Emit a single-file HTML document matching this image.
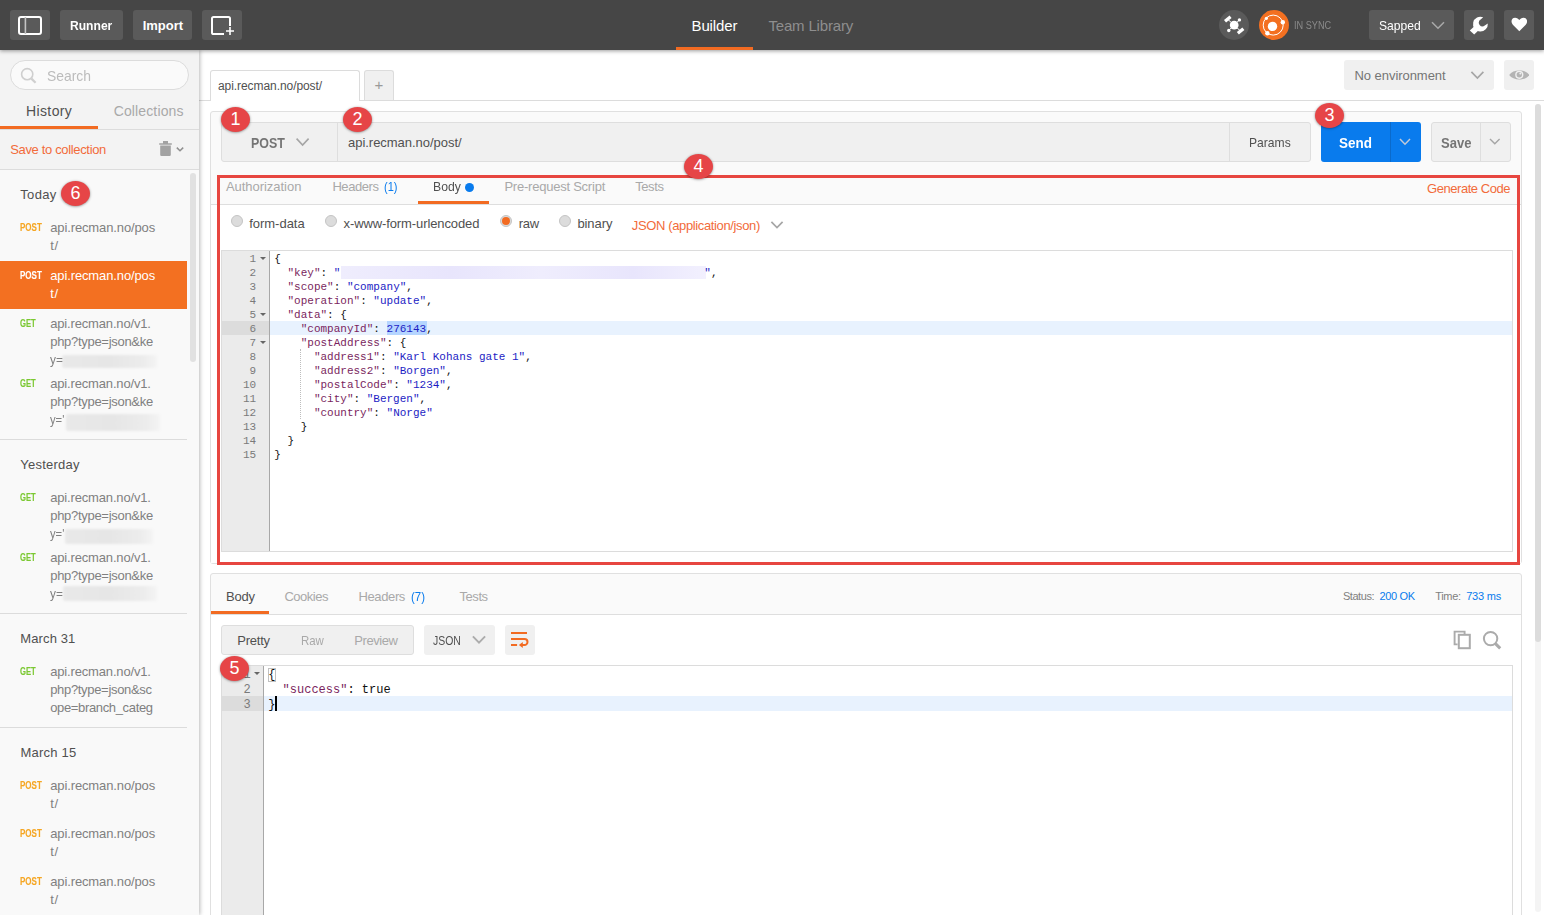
<!DOCTYPE html>
<html><head><meta charset="utf-8"><title>Postman</title>
<style>
*{box-sizing:border-box;margin:0;padding:0}
html,body{width:1544px;height:915px;overflow:hidden;background:#fff;font-family:"Liberation Sans",sans-serif;color:#505050}
.a{position:absolute}
.t{position:absolute;white-space:nowrap;line-height:20px;height:20px}
#hdr{left:0;top:0;width:1544px;height:50px;background:#464646;box-shadow:0 1px 4px rgba(0,0,0,.4);z-index:10}
.hb{position:absolute;top:10px;height:30px;background:#5a5a5a;border-radius:3px}
#side{left:0;top:50px;width:199px;height:865px;background:#f3f3f3;box-shadow:1px 0 4px rgba(0,0,0,.28);z-index:5}
.hl{position:absolute;height:1px;background:#dcdcdc}
.badge{position:absolute;width:29px;height:25px;border-radius:50%;background:#e64547;color:#fff;font-size:18px;line-height:25px;text-align:center;box-shadow:0 .5px 2.5px rgba(0,0,0,.45);z-index:20}
.panel{position:absolute;background:#fafafa;border:1px solid #e0e0e0;border-radius:3px}
.gbox{position:absolute;background:#f0f0f0;border:1px solid #dedede}
.radio{position:absolute;width:12px;height:12px;border-radius:6px;background:#dcdcdc;border:1px solid #c4c4c4}
.ed{position:absolute;border:1px solid #dcdcdc;background:#fff;overflow:hidden;font-family:"Liberation Mono",monospace}
.gut{position:absolute;left:0;top:0;bottom:0;background:#ebebeb;border-right:1px solid #a8a8a8}
.ln{position:absolute;left:0;text-align:right;color:#7a7a7a;white-space:pre}
.cl{position:absolute;white-space:pre;color:#111}
.k{color:#7a1f5e}.s{color:#1c1cc4}.n{color:#1c1cc4}
.fold{position:absolute;width:0;height:0;border-left:3px solid transparent;border-right:3px solid transparent;border-top:3px solid #666}
.blur{position:absolute;background:linear-gradient(90deg,#e9e9e9,#e6e6e6 50%,#ececec 85%,#f4f4f4);border-radius:2px;filter:blur(1.3px);z-index:6}
</style></head><body>

<!-- ================= HEADER ================= -->
<div id="hdr" class="a">
  <div class="hb" style="left:10px;width:40px">
    <svg class="a" style="left:7px;top:5px" width="26" height="21" viewBox="0 0 26 21"><rect x="2" y="2" width="22" height="17" rx="2" fill="none" stroke="#fff" stroke-width="2"/><rect x="7.6" y="2" width="1.6" height="17" fill="#c4c4c4"/></svg>
  </div>
  <div class="hb" style="left:60px;width:63px"></div>
  <div class="hb" style="left:133px;width:59px"></div>
  <div class="hb" style="left:202px;width:40px">
    <svg class="a" style="left:8px;top:5px" width="26" height="21" viewBox="0 0 26 21"><path d="M20 11V3.6Q20 2 18.4 2H3.6Q2 2 2 3.6V17.4Q2 19 3.6 19H14" fill="none" stroke="#fff" stroke-width="2"/><path d="M16 16H24M20 12V20" stroke="#fff" stroke-width="1.6" fill="none"/></svg>
  </div>
  <div class="a" style="left:676px;top:47px;width:77px;height:3px;background:#f26b22"></div>
  <!-- satellite -->
  <div class="a" style="left:1219px;top:10px;width:30px;height:30px;border-radius:15px;background:#5a5a5a"></div>
  <svg class="a" style="left:1219px;top:10px" width="30" height="30" viewBox="0 0 30 30"><g stroke="#fff" stroke-width="1" fill="#fff"><line x1="15" y1="15" x2="9" y2="9.5"/><line x1="15" y1="15" x2="21.5" y2="21"/><line x1="15" y1="15" x2="20.4" y2="10"/><line x1="15" y1="15" x2="9.8" y2="20.4"/></g><circle cx="15.2" cy="15.1" r="4.4" fill="#fff"/><rect x="-3.6" y="-1.6" width="7.2" height="3.2" transform="translate(8.8 9) rotate(-40)" fill="#fff"/><rect x="-3.6" y="-1.6" width="7.2" height="3.2" transform="translate(21.6 21) rotate(-40)" fill="#fff"/><circle cx="20.4" cy="9.9" r="1.7" fill="#fff"/><circle cx="9.8" cy="20.5" r="1.7" fill="#fff"/></svg>
  <!-- sync -->
  <svg class="a" style="left:1259px;top:10px" width="30" height="30" viewBox="0 0 30 30"><circle cx="15" cy="15" r="15" fill="#f37021"/><circle cx="14.2" cy="15.1" r="10" fill="none" stroke="#fff" stroke-width="1"/><circle cx="13.5" cy="16.4" r="4.7" fill="#fff"/><circle cx="7.4" cy="8.3" r="1.6" fill="#fff"/><circle cx="23.8" cy="12.2" r="2.2" fill="#fff"/><circle cx="8.4" cy="23.3" r="2.2" fill="#fff"/></svg>
  <div class="hb" style="left:1369px;width:85px">
    <svg class="a" style="left:62px;top:11px" width="14" height="9" viewBox="0 0 14 9"><path d="M1 1.2L7 7.2L13 1.2" fill="none" stroke="#a8a8a8" stroke-width="1.6"/></svg>
  </div>
  <div class="hb" style="left:1464px;width:30px">
    <svg class="a" style="left:0;top:0" width="30" height="30" viewBox="0 0 30 30"><path d="M19.2 7.2a7.4 7.4 0 1 0 4.6 6.2l-4.2 2.9a3.9 3.9 0 0 1-4.4-5.6z" fill="#fff"/><path d="M10.4 16.2L5.8 20.6L10.2 24.4L14.6 20.2z" fill="#fff"/></svg>
  </div>
  <div class="hb" style="left:1504px;width:30px">
    <svg class="a" style="left:6.8px;top:7.4px" width="16.6" height="15" viewBox="0 0 18 16"><path d="M9 15.4L2 8.2C-.6 5.4.4 .6 4.4.6 6.6.6 8 1.8 9 3.2 10 1.8 11.4.6 13.6.6c4 0 5 4.8 2.4 7.6z" fill="#fff"/></svg>
  </div>
</div>

<!-- ================= SIDEBAR ================= -->
<div id="side" class="a">
  <div class="a" style="left:10px;top:10px;width:179px;height:30px;border-radius:15px;background:#fafafa;border:1px solid #dcdcdc"></div>
  <svg class="a" style="left:20px;top:17px" width="18" height="18" viewBox="0 0 18 18"><circle cx="7.2" cy="7.2" r="5.6" fill="none" stroke="#cfcfcf" stroke-width="1.6"/><path d="M11.4 11.6L15.6 15.8" stroke="#cfcfcf" stroke-width="2.2"/></svg>
  <div class="hl" style="left:0;top:79px;width:199px"></div>
  <div class="a" style="left:0;top:76px;width:98px;height:3px;background:#f26b22"></div>
  <!-- trash -->
  <svg class="a" style="left:158px;top:90px" width="28" height="18" viewBox="0 0 28 18"><path d="M1.2 3.2h12.6v1.6H1.2zM5 1h5v2.4H5zM2.2 5.6h10.6v9.2q0 1.2-1.2 1.2H3.4q-1.2 0-1.2-1.2z" fill="#a2a2a2"/><path d="M18.8 7.6L22 10.8L25.2 7.6" fill="none" stroke="#909090" stroke-width="1.5"/></svg>
  <div class="hl" style="left:0;top:119px;width:199px"></div>
  <div class="a" style="left:0;top:120px;width:199px;height:745px;background:#f9f9f9"></div>
  <div class="a" style="left:190px;top:123px;width:6px;height:189px;border-radius:3px;background:#e1e1e1"></div>
  <div class="a" style="left:0;top:211px;width:187px;height:48px;background:#f37021"></div>
  <div class="hl" style="left:0;top:389px;width:187px"></div>
  <div class="hl" style="left:0;top:563px;width:187px"></div>
  <div class="hl" style="left:0;top:677px;width:187px"></div>
</div>
<div class="blur" style="left:62px;top:355px;width:95px;height:13px"></div>
<div class="blur" style="left:66px;top:414px;width:94px;height:17px"></div>
<div class="blur" style="left:65px;top:529px;width:88px;height:15px"></div>
<div class="blur" style="left:63px;top:586px;width:94px;height:15px"></div>

<!-- ================= MAIN TOP (tabs / env) ================= -->
<div class="hl" style="left:199px;top:100px;width:1345px"></div>
<div class="a" style="left:210px;top:70px;width:150px;height:31px;background:#fff;border:1px solid #dcdcdc;border-bottom:0;border-radius:3px 3px 0 0"></div>
<div class="a" style="left:364px;top:70px;width:30px;height:30px;background:#f0f0f0;border:1px solid #dcdcdc;border-bottom:0;border-radius:3px 3px 0 0"></div>
<div class="a" style="left:1344px;top:60px;width:150px;height:30px;background:#f0f0f0;border-radius:3px"></div>
<svg class="a" style="left:1470px;top:70px" width="14" height="10" viewBox="0 0 14 10"><path d="M1.4 1.8L7.4 8L13.4 1.8" fill="none" stroke="#a6a6a6" stroke-width="1.7"/></svg>
<div class="a" style="left:1504px;top:60px;width:30px;height:30px;background:#f0f0f0;border-radius:3px"></div>
<svg class="a" style="left:1508.6px;top:68.6px" width="20.6" height="12" viewBox="0 0 20.6 12"><path d="M.2 6C4 .1 16.6 .1 20.4 6 16.6 11.9 4 11.9 .2 6z" fill="#b4b4b4"/><circle cx="10.3" cy="5.8" r="4.1" fill="#f0f0f0"/><circle cx="10.3" cy="5.8" r="2.7" fill="#b4b4b4"/><circle cx="11.3" cy="4.6" r="1" fill="#f0f0f0"/></svg>
<!-- main scrollbar -->
<div class="a" style="left:1535px;top:104px;width:6px;height:808px;border-radius:3px;background:#f4f4f4"></div>
<div class="a" style="left:1535px;top:104px;width:6px;height:538px;border-radius:3px;background:#dcdcdc"></div>

<!-- ================= REQUEST PANEL ================= -->
<div class="panel" style="left:210px;top:111px;width:1312px;height:453px"></div>
<div class="a" style="left:211px;top:205px;width:1310px;height:358px;background:#fff"></div>
<div class="hl" style="left:211px;top:204px;width:1310px;background:#dedede"></div>
<!-- url bar -->
<div class="gbox" style="left:221px;top:122px;width:1090px;height:40px;border-radius:3px"></div>
<div class="a" style="left:337px;top:123px;width:1px;height:38px;background:#dedede"></div>
<div class="a" style="left:1229px;top:123px;width:1px;height:38px;background:#dedede"></div>
<svg class="a" style="left:295px;top:137px" width="15" height="10" viewBox="0 0 15 10"><path d="M1.6 1.6L7.6 8L13.6 1.6" fill="none" stroke="#a5a5a5" stroke-width="1.6"/></svg>
<!-- send -->
<div class="a" style="left:1321px;top:122px;width:100px;height:40px;background:#097bed;border-radius:3px"></div>
<div class="a" style="left:1390px;top:122px;width:1px;height:40px;background:#0a6acb"></div>
<svg class="a" style="left:1399px;top:138px" width="12" height="8" viewBox="0 0 12 8"><path d="M1 1L6 6.2L11 1" fill="none" stroke="#c2cad8" stroke-width="1.5"/></svg>
<!-- save -->
<div class="gbox" style="left:1431px;top:122px;width:80px;height:40px;border-radius:3px"></div>
<div class="a" style="left:1480px;top:123px;width:1px;height:38px;background:#dedede"></div>
<svg class="a" style="left:1489px;top:138px" width="12" height="8" viewBox="0 0 12 8"><path d="M1 1L5.8 5.8L10.6 1" fill="none" stroke="#a5a5a5" stroke-width="1.4"/></svg>
<!-- request tabs underline + dot -->
<div class="a" style="left:418px;top:201px;width:71px;height:3px;background:#f26b22"></div>
<div class="a" style="left:465.3px;top:182.6px;width:9px;height:9px;border-radius:5px;background:#097bed"></div>
<!-- body type radios -->
<div class="radio" style="left:231px;top:215px"></div>
<div class="radio" style="left:325px;top:215px"></div>
<div class="radio" style="left:500px;top:215px"><div class="a" style="left:1px;top:1px;width:8px;height:8px;border-radius:4px;background:#f26b22"></div></div>
<div class="radio" style="left:559px;top:215px"></div>
<svg class="a" style="left:770px;top:220px" width="14" height="10" viewBox="0 0 14 10"><path d="M1.4 1.8L7 7.6L12.6 1.8" fill="none" stroke="#a6a6a6" stroke-width="1.7"/></svg>

<!-- request editor -->
<div class="ed" id="ed1" style="left:221px;top:250px;width:1292px;height:302px;font-size:11px;line-height:14px">
  <div class="gut" style="width:48px"></div>
  <div class="a" style="left:0;top:70px;width:47px;height:14px;background:#dcdcdc"></div>
  <div class="a" style="left:48px;top:70px;width:1243px;height:14px;background:#e8f2fe"></div>
  <div class="a" style="left:165.4px;top:70px;width:40px;height:14px;background:#b5d5ff"></div>
  <div class="a" style="left:78px;top:98px;width:0;height:70px;border-left:1px dotted #bdbdbd"></div>
  <div class="a" style="left:119px;top:15px;width:365px;height:13px;background:linear-gradient(90deg,#efedfd,#e8e5fc 30%,#efedfd 55%,#e8e5fc 80%,#f2f0fe);filter:blur(.6px)"></div>
<div class="ln" style="top:1px;width:34.2px">1</div>
<div class="fold" style="left:38px;top:6px"></div>
<div class="cl" style="left:52.3px;top:1px">{</div>
<div class="ln" style="top:15px;width:34.2px">2</div>
<div class="cl" style="left:52.3px;top:15px">  <span class="k">"key"</span>: <span class="s">"</span><span style="display:inline-block;width:364px"></span><span class="s">"</span>,</div>
<div class="ln" style="top:29px;width:34.2px">3</div>
<div class="cl" style="left:52.3px;top:29px">  <span class="k">"scope"</span>: <span class="s">"company"</span>,</div>
<div class="ln" style="top:43px;width:34.2px">4</div>
<div class="cl" style="left:52.3px;top:43px">  <span class="k">"operation"</span>: <span class="s">"update"</span>,</div>
<div class="ln" style="top:57px;width:34.2px">5</div>
<div class="fold" style="left:38px;top:62px"></div>
<div class="cl" style="left:52.3px;top:57px">  <span class="k">"data"</span>: {</div>
<div class="ln" style="top:71px;width:34.2px">6</div>
<div class="cl" style="left:52.3px;top:71px">    <span class="k">"companyId"</span>: <span class="n">276143</span>,</div>
<div class="ln" style="top:85px;width:34.2px">7</div>
<div class="fold" style="left:38px;top:90px"></div>
<div class="cl" style="left:52.3px;top:85px">    <span class="k">"postAddress"</span>: {</div>
<div class="ln" style="top:99px;width:34.2px">8</div>
<div class="cl" style="left:52.3px;top:99px">      <span class="k">"address1"</span>: <span class="s">"Karl Kohans gate 1"</span>,</div>
<div class="ln" style="top:113px;width:34.2px">9</div>
<div class="cl" style="left:52.3px;top:113px">      <span class="k">"address2"</span>: <span class="s">"Borgen"</span>,</div>
<div class="ln" style="top:127px;width:34.2px">10</div>
<div class="cl" style="left:52.3px;top:127px">      <span class="k">"postalCode"</span>: <span class="s">"1234"</span>,</div>
<div class="ln" style="top:141px;width:34.2px">11</div>
<div class="cl" style="left:52.3px;top:141px">      <span class="k">"city"</span>: <span class="s">"Bergen"</span>,</div>
<div class="ln" style="top:155px;width:34.2px">12</div>
<div class="cl" style="left:52.3px;top:155px">      <span class="k">"country"</span>: <span class="s">"Norge"</span></div>
<div class="ln" style="top:169px;width:34.2px">13</div>
<div class="cl" style="left:52.3px;top:169px">    }</div>
<div class="ln" style="top:183px;width:34.2px">14</div>
<div class="cl" style="left:52.3px;top:183px">  }</div>
<div class="ln" style="top:197px;width:34.2px">15</div>
<div class="cl" style="left:52.3px;top:197px">}</div>
</div>

<!-- red annotation box -->
<div class="a" style="left:217px;top:175px;width:1303px;height:390px;border:3px solid #e74640;z-index:15"></div>

<!-- ================= RESPONSE PANEL ================= -->
<div class="panel" style="left:210px;top:573px;width:1312px;height:360px"></div>
<div class="a" style="left:211px;top:615px;width:1310px;height:300px;background:#fff"></div>
<div class="hl" style="left:211px;top:614px;width:1310px;background:#dedede"></div>
<div class="a" style="left:211px;top:611px;width:58px;height:3px;background:#f26b22"></div>
<div class="gbox" style="left:221px;top:625px;width:193px;height:30px;border-radius:3px"></div>
<div class="a" style="left:424px;top:625px;width:71px;height:30px;background:#f0f0f0;border-radius:3px"></div>
<svg class="a" style="left:472px;top:635px" width="14" height="10" viewBox="0 0 14 10"><path d="M0.9 1.3L7 7.7L13.1 1.3" fill="none" stroke="#acacac" stroke-width="1.9"/></svg>
<div class="a" style="left:505px;top:625px;width:30px;height:30px;background:#f0f0f0;border-radius:3px"></div>
<svg class="a" style="left:510px;top:631px" width="20" height="18" viewBox="0 0 20 18"><path d="M1 2H17M1 8H14.5a3 3 0 0 1 0 6H12M1 14H7.1" fill="none" stroke="#f26b22" stroke-width="2"/><path d="M8.9 13.9L12.8 10.9V16.9z" fill="#f26b22"/></svg>
<!-- copy / search icons -->
<svg class="a" style="left:1453px;top:630px" width="19" height="20" viewBox="0 0 19 20"><path d="M4.6 14.4H1.6V1.6H11.6V4.2" fill="none" stroke="#ababab" stroke-width="1.9"/><rect x="5.8" y="4.8" width="11" height="13.4" fill="none" stroke="#ababab" stroke-width="2"/></svg>
<svg class="a" style="left:1482px;top:630px" width="20" height="20" viewBox="0 0 20 20"><circle cx="8.6" cy="8.6" r="6.7" fill="none" stroke="#ababab" stroke-width="2"/><path d="M13.4 13.6L18.2 18.4" stroke="#ababab" stroke-width="3"/></svg>

<!-- response editor -->
<div class="ed" id="ed2" style="left:221px;top:665px;width:1292px;height:260px;font-size:12px;line-height:15px">
  <div class="gut" style="width:42px"></div>
  <div class="a" style="left:0;top:30px;width:41px;height:15px;background:#dcdcdc"></div>
  <div class="a" style="left:42px;top:30px;width:1249px;height:15px;background:#e8f2fe"></div>
  <div class="a" style="left:46px;top:2px;width:8px;height:14px;border:1px solid #c0c0c0"></div>
  <div class="a" style="left:53.4px;top:30px;width:2px;height:15px;background:#000"></div>
<div class="ln" style="top:2px;width:28.6px">1</div>
<div class="fold" style="left:32px;top:6px"></div>
<div class="cl" style="left:46.2px;top:2px">{</div>
<div class="ln" style="top:17px;width:28.6px">2</div>
<div class="cl" style="left:46.2px;top:17px">  <span class="k">"success"</span>: true</div>
<div class="ln" style="top:32px;width:28.6px">3</div>
<div class="cl" style="left:46.2px;top:32px">}</div>
</div>

<!-- ================= BADGES ================= -->
<div class="badge" style="left:221px;top:106.5px">1</div>
<div class="badge" style="left:343px;top:106.5px">2</div>
<div class="badge" style="left:1315px;top:103.4px">3</div>
<div class="badge" style="left:684px;top:154.2px">4</div>
<div class="badge" style="left:220.1px;top:655.7px">5</div>
<div class="badge" style="left:61.1px;top:180.6px">6</div>

<span class="t" style="left:70.1px;top:16.00px;font-size:13px;color:#fff;font-weight:bold;z-index:11;transform:scaleX(0.930);transform-origin:0 0;">Runner</span>
<span class="t" style="left:142.8px;top:16.00px;font-size:13px;color:#fff;font-weight:bold;letter-spacing:-0.05px;z-index:11;">Import</span>
<span class="t" style="left:691.5px;top:16.00px;font-size:15px;color:#fff;letter-spacing:-0.12px;z-index:11;">Builder</span>
<span class="t" style="left:768.4px;top:16.00px;font-size:15px;color:#8e8e8e;letter-spacing:-0.17px;z-index:11;">Team Library</span>
<span class="t" style="left:1294.4px;top:16.00px;font-size:10px;color:#8a8a8a;z-index:11;transform:scaleX(0.915);transform-origin:0 0;">IN SYNC</span>
<span class="t" style="left:1378.9px;top:16.00px;font-size:13px;color:#fff;z-index:11;transform:scaleX(0.932);transform-origin:0 0;">Sapped</span>
<span class="t" style="left:47.2px;top:66.00px;font-size:15px;color:#bcbcbc;z-index:6;transform:scaleX(0.926);transform-origin:0 0;">Search</span>
<span class="t" style="left:26.0px;top:101.00px;font-size:14px;color:#505050;letter-spacing:0.38px;z-index:6;">History</span>
<span class="t" style="left:113.7px;top:101.00px;font-size:14px;color:#a9a9a9;letter-spacing:0.13px;z-index:6;">Collections</span>
<span class="t" style="left:10.2px;top:140.00px;font-size:13px;color:#f26b3a;letter-spacing:-0.34px;z-index:6;">Save to collection</span>
<span class="t" style="left:20.3px;top:185.00px;font-size:13px;color:#505050;letter-spacing:0.31px;z-index:6;">Today</span>
<span class="t" style="left:20.3px;top:455.00px;font-size:13px;color:#505050;letter-spacing:0.24px;z-index:6;">Yesterday</span>
<span class="t" style="left:20.3px;top:629.00px;font-size:13px;color:#505050;letter-spacing:0.12px;z-index:6;">March 31</span>
<span class="t" style="left:20.4px;top:743.00px;font-size:13px;color:#505050;letter-spacing:0.24px;z-index:6;">March 15</span>
<span class="t" style="left:20.3px;top:218.00px;font-size:10px;color:#f5a623;font-weight:bold;z-index:6;transform:scaleX(0.804);transform-origin:0 0;-webkit-text-stroke:.1px;">POST</span>
<span class="t" style="left:50.2px;top:218.00px;font-size:13px;color:#808080;letter-spacing:-0.12px;z-index:6;">api.recman.no/pos</span>
<span class="t" style="left:50.2px;top:236.00px;font-size:13px;color:#808080;letter-spacing:0.71px;z-index:6;">t/</span>
<span class="t" style="left:20.3px;top:266.00px;font-size:10px;color:#fff;font-weight:bold;z-index:6;transform:scaleX(0.804);transform-origin:0 0;-webkit-text-stroke:.1px;">POST</span>
<span class="t" style="left:50.2px;top:266.00px;font-size:13px;color:#fff;letter-spacing:-0.12px;z-index:6;">api.recman.no/pos</span>
<span class="t" style="left:50.2px;top:284.00px;font-size:13px;color:#fff;letter-spacing:0.71px;z-index:6;">t/</span>
<span class="t" style="left:20.3px;top:314.00px;font-size:10px;color:#7bc832;font-weight:bold;z-index:6;transform:scaleX(0.768);transform-origin:0 0;-webkit-text-stroke:.1px;">GET</span>
<span class="t" style="left:50.2px;top:314.00px;font-size:13px;color:#808080;letter-spacing:-0.16px;z-index:6;">api.recman.no/v1.</span>
<span class="t" style="left:50.2px;top:332.00px;font-size:13px;color:#808080;letter-spacing:-0.29px;z-index:6;">php?type=json&amp;ke</span>
<span class="t" style="left:50.2px;top:350.00px;font-size:13px;color:#808080;z-index:6;transform:scaleX(0.908);transform-origin:0 0;">y=</span>
<span class="t" style="left:20.3px;top:374.00px;font-size:10px;color:#7bc832;font-weight:bold;z-index:6;transform:scaleX(0.768);transform-origin:0 0;-webkit-text-stroke:.1px;">GET</span>
<span class="t" style="left:50.2px;top:374.00px;font-size:13px;color:#808080;letter-spacing:-0.16px;z-index:6;">api.recman.no/v1.</span>
<span class="t" style="left:50.2px;top:392.00px;font-size:13px;color:#808080;letter-spacing:-0.29px;z-index:6;">php?type=json&amp;ke</span>
<span class="t" style="left:50.2px;top:410.00px;font-size:13px;color:#808080;z-index:6;transform:scaleX(0.863);transform-origin:0 0;">y=&#x27;</span>
<span class="t" style="left:20.3px;top:488.00px;font-size:10px;color:#7bc832;font-weight:bold;z-index:6;transform:scaleX(0.768);transform-origin:0 0;-webkit-text-stroke:.1px;">GET</span>
<span class="t" style="left:50.2px;top:488.00px;font-size:13px;color:#808080;letter-spacing:-0.16px;z-index:6;">api.recman.no/v1.</span>
<span class="t" style="left:50.2px;top:506.00px;font-size:13px;color:#808080;letter-spacing:-0.29px;z-index:6;">php?type=json&amp;ke</span>
<span class="t" style="left:50.2px;top:524.00px;font-size:13px;color:#808080;z-index:6;transform:scaleX(0.863);transform-origin:0 0;">y=&#x27;</span>
<span class="t" style="left:20.3px;top:548.00px;font-size:10px;color:#7bc832;font-weight:bold;z-index:6;transform:scaleX(0.768);transform-origin:0 0;-webkit-text-stroke:.1px;">GET</span>
<span class="t" style="left:50.2px;top:548.00px;font-size:13px;color:#808080;letter-spacing:-0.16px;z-index:6;">api.recman.no/v1.</span>
<span class="t" style="left:50.2px;top:566.00px;font-size:13px;color:#808080;letter-spacing:-0.29px;z-index:6;">php?type=json&amp;ke</span>
<span class="t" style="left:50.2px;top:584.00px;font-size:13px;color:#808080;z-index:6;transform:scaleX(0.908);transform-origin:0 0;">y=</span>
<span class="t" style="left:20.3px;top:662.00px;font-size:10px;color:#7bc832;font-weight:bold;z-index:6;transform:scaleX(0.768);transform-origin:0 0;-webkit-text-stroke:.1px;">GET</span>
<span class="t" style="left:50.2px;top:662.00px;font-size:13px;color:#808080;letter-spacing:-0.16px;z-index:6;">api.recman.no/v1.</span>
<span class="t" style="left:50.2px;top:680.00px;font-size:13px;color:#808080;letter-spacing:-0.32px;z-index:6;">php?type=json&amp;sc</span>
<span class="t" style="left:50.2px;top:698.00px;font-size:13px;color:#808080;letter-spacing:-0.35px;z-index:6;">ope=branch_categ</span>
<span class="t" style="left:20.3px;top:776.00px;font-size:10px;color:#f5a623;font-weight:bold;z-index:6;transform:scaleX(0.804);transform-origin:0 0;-webkit-text-stroke:.1px;">POST</span>
<span class="t" style="left:50.2px;top:776.00px;font-size:13px;color:#808080;letter-spacing:-0.12px;z-index:6;">api.recman.no/pos</span>
<span class="t" style="left:50.2px;top:794.00px;font-size:13px;color:#808080;letter-spacing:0.71px;z-index:6;">t/</span>
<span class="t" style="left:20.3px;top:824.00px;font-size:10px;color:#f5a623;font-weight:bold;z-index:6;transform:scaleX(0.804);transform-origin:0 0;-webkit-text-stroke:.1px;">POST</span>
<span class="t" style="left:50.2px;top:824.00px;font-size:13px;color:#808080;letter-spacing:-0.12px;z-index:6;">api.recman.no/pos</span>
<span class="t" style="left:50.2px;top:842.00px;font-size:13px;color:#808080;letter-spacing:0.71px;z-index:6;">t/</span>
<span class="t" style="left:20.3px;top:872.00px;font-size:10px;color:#f5a623;font-weight:bold;z-index:6;transform:scaleX(0.804);transform-origin:0 0;-webkit-text-stroke:.1px;">POST</span>
<span class="t" style="left:50.2px;top:872.00px;font-size:13px;color:#808080;letter-spacing:-0.12px;z-index:6;">api.recman.no/pos</span>
<span class="t" style="left:50.2px;top:890.00px;font-size:13px;color:#808080;letter-spacing:0.71px;z-index:6;">t/</span>
<span class="t" style="left:218.0px;top:76.00px;font-size:12px;color:#505050;letter-spacing:-0.07px;">api.recman.no/post/</span>
<span class="t" style="left:374.6px;top:75.00px;font-size:15px;color:#9a9a9a;letter-spacing:0.03px;">+</span>
<span class="t" style="left:1354.5px;top:66.00px;font-size:13px;color:#757575;letter-spacing:-0.05px;">No environment</span>
<span class="t" style="left:250.7px;top:133.00px;font-size:14px;color:#757575;font-weight:bold;transform:scaleX(0.887);transform-origin:0 0;">POST</span>
<span class="t" style="left:348.0px;top:133.00px;font-size:13px;color:#505050;letter-spacing:-0.03px;">api.recman.no/post/</span>
<span class="t" style="left:1249.3px;top:133.00px;font-size:13px;color:#505050;transform:scaleX(0.931);transform-origin:0 0;">Params</span>
<span class="t" style="left:1339.2px;top:133.00px;font-size:15px;color:#fff;font-weight:bold;transform:scaleX(0.897);transform-origin:0 0;">Send</span>
<span class="t" style="left:1440.7px;top:133.00px;font-size:15px;color:#757575;font-weight:bold;transform:scaleX(0.870);transform-origin:0 0;">Save</span>
<span class="t" style="left:225.9px;top:177.00px;font-size:13px;color:#a9a9a9;letter-spacing:-0.03px;">Authorization</span>
<span class="t" style="left:332.4px;top:177.00px;font-size:13px;color:#a9a9a9;letter-spacing:-0.44px;">Headers</span>
<span class="t" style="left:384.2px;top:177.00px;font-size:13px;color:#097bed;transform:scaleX(0.850);transform-origin:0 0;">(1)</span>
<span class="t" style="left:433.4px;top:177.00px;font-size:13px;color:#505050;transform:scaleX(0.938);transform-origin:0 0;">Body</span>
<span class="t" style="left:504.4px;top:177.00px;font-size:13px;color:#a9a9a9;letter-spacing:-0.23px;">Pre-request Script</span>
<span class="t" style="left:635.2px;top:177.00px;font-size:13px;color:#a9a9a9;letter-spacing:-0.41px;">Tests</span>
<span class="t" style="left:1427.0px;top:179.00px;font-size:13px;color:#f26b3a;letter-spacing:-0.45px;">Generate Code</span>
<span class="t" style="left:249.2px;top:214.00px;font-size:13px;color:#505050;letter-spacing:-0.02px;">form-data</span>
<span class="t" style="left:343.5px;top:214.00px;font-size:13px;color:#505050;letter-spacing:-0.10px;">x-www-form-urlencoded</span>
<span class="t" style="left:518.8px;top:214.00px;font-size:13px;color:#505050;letter-spacing:-0.30px;">raw</span>
<span class="t" style="left:577.4px;top:214.00px;font-size:13px;color:#505050;letter-spacing:-0.08px;">binary</span>
<span class="t" style="left:631.8px;top:216.00px;font-size:13px;color:#f26b3a;letter-spacing:-0.37px;">JSON (application/json)</span>
<span class="t" style="left:226.1px;top:587.00px;font-size:13px;color:#505050;letter-spacing:-0.27px;">Body</span>
<span class="t" style="left:284.4px;top:587.00px;font-size:13px;color:#a9a9a9;letter-spacing:-0.49px;">Cookies</span>
<span class="t" style="left:358.5px;top:587.00px;font-size:13px;color:#a9a9a9;letter-spacing:-0.38px;">Headers</span>
<span class="t" style="left:410.5px;top:587.00px;font-size:13px;color:#097bed;transform:scaleX(0.881);transform-origin:0 0;">(7)</span>
<span class="t" style="left:459.5px;top:587.00px;font-size:13px;color:#a9a9a9;letter-spacing:-0.43px;">Tests</span>
<span class="t" style="left:1342.9px;top:586.00px;font-size:11px;color:#808080;letter-spacing:-0.44px;">Status:</span>
<span class="t" style="left:1379.6px;top:586.00px;font-size:11px;color:#097bed;letter-spacing:-0.37px;">200 OK</span>
<span class="t" style="left:1435.2px;top:586.00px;font-size:11px;color:#808080;letter-spacing:-0.31px;">Time:</span>
<span class="t" style="left:1466.2px;top:586.00px;font-size:11px;color:#097bed;letter-spacing:-0.20px;">733 ms</span>
<span class="t" style="left:237.3px;top:631.00px;font-size:13px;color:#505050;letter-spacing:-0.23px;">Pretty</span>
<span class="t" style="left:300.7px;top:631.00px;font-size:13px;color:#a9a9a9;transform:scaleX(0.880);transform-origin:0 0;">Raw</span>
<span class="t" style="left:354.3px;top:631.00px;font-size:13px;color:#a9a9a9;letter-spacing:-0.44px;">Preview</span>
<span class="t" style="left:433.2px;top:631.00px;font-size:13px;color:#505050;transform:scaleX(0.805);transform-origin:0 0;">JSON</span>
</body></html>
